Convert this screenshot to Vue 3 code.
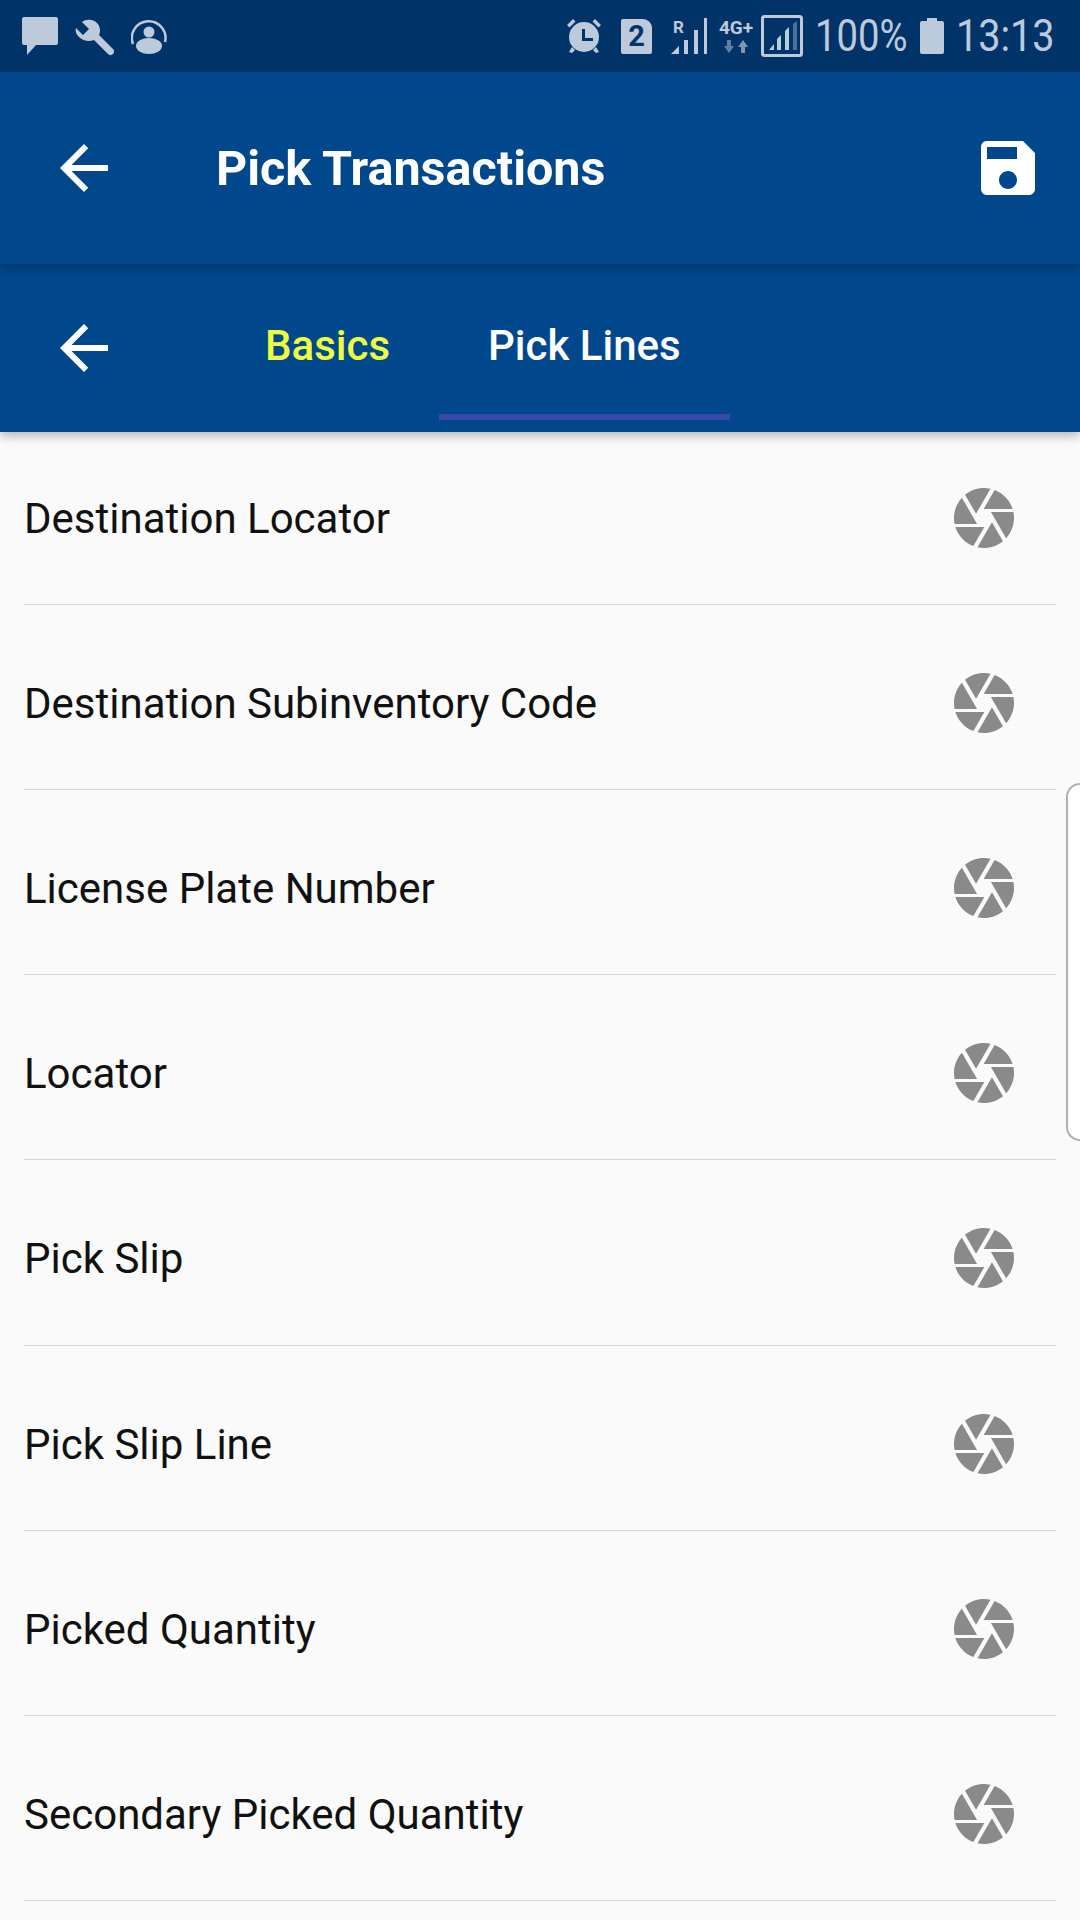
<template>
  <div class="screen">
    <div class="status">
      <div class="status__left">
        <svg class="ico" width="36" height="38" viewBox="0 0 36 38">
          <path d="M2 0h32a2 2 0 0 1 2 2v24a2 2 0 0 1-2 2H14L5 38V28H2a2 2 0 0 1-2-2V2a2 2 0 0 1 2-2z" />
        </svg>
        <svg class="ico" width="39" height="39" viewBox="0 0 39 39">
          <path d="M1 11 8 18l6-6-7-7c4-3 11-3 15 1 3 3 4 8 2 12l14 14c1.500 1.500 1.500 3.500 0 5s-3.500 1.500-5 0L19 23c-5 2-11 1-15-3-3-3-4-6-3-9z" />
        </svg>
        <svg class="ico" width="36" height="36" viewBox="0 0 36 36">
          <path class="ico__line" d="M2 26A16.800 16.800 0 1 1 34 24" />
          <circle cx="18" cy="14" r="5.500" />
          <ellipse cx="18" cy="28" rx="13" ry="8" />
        </svg>
      </div>
      <div class="status__right">
        <svg class="ico" width="36" height="36" viewBox="0 0 36 36">
          <path d="M18 4a15 15 0 1 0 0 30 15 15 0 0 0 0-30zm-2 7h3v9h8v3H16z" fill-rule="evenodd" />
          <path d="M1 7 7 1l2.500 2.500-6 6zM35 7l-6-6-2.500 2.500 6 6zM6 29l-3 5 3 1 3-3zM30 29l3 5-3 1-3-3z" />
        </svg>
        <div class="sim">2</div>
        <svg class="ico signal" width="36" height="36" viewBox="0 0 36 36">
          <text x="2" y="15" class="signal__r">R</text>
          <path d="M0 36 8 28V36zM13 22h4v14h-4zM23 12h4v24h-4zM33 0h3v36h-3z" />
        </svg>
        <div class="net">
          <span class="net__label">4G+</span>
          <svg width="24" height="13" viewBox="0 0 24 13">
            <path class="net__down" d="M3 0h4v6h3l-5 7-5-7h3z" />
            <path class="net__up" d="M19 0l5 7h-3v6h-4V7h-3z" />
          </svg>
        </div>
        <svg class="ico box" width="42" height="42" viewBox="0 0 42 42">
          <rect x="1.500" y="1.500" width="39" height="39" rx="2" fill="none" stroke="#bccadb" stroke-width="3" />
          <path d="M8 35l5-6v6zM16 35v-11l4-4v15zM24 35V16l4-4v23z" />
          <path class="box__dim" d="M32 35V9l4-3v29z" />
        </svg>
        <div class="status__slot status__slot--pct">
          <span class="status__text status__text--pct">100%</span>
        </div>
        <svg class="ico" width="24" height="36" viewBox="0 0 24 36">
          <path d="M7 0h10v3h5a2 2 0 0 1 2 2v29a2 2 0 0 1-2 2H2a2 2 0 0 1-2-2V5a2 2 0 0 1 2-2h5z" />
        </svg>
        <div class="status__slot status__slot--time">
          <span class="status__text status__text--time">13:13</span>
        </div>
      </div>
    </div>

    <header class="toolbar">
      <svg class="back" width="72" height="72" viewBox="0 0 24 24">
        <path d="M20 11H7.830l5.590-5.590L12 4l-8 8 8 8 1.410-1.410L7.830 13H20v-2z" />
      </svg>
      <h1 class="toolbar__title">Pick Transactions</h1>
      <svg class="save" width="72" height="72" viewBox="0 0 24 24">
        <path d="M17 3H5c-1.110 0-2 .9-2 2v14c0 1.100.89 2 2 2h14c1.100 0 2-.9 2-2V7l-4-4zm-5 16c-1.660 0-3-1.340-3-3s1.340-3 3-3 3 1.340 3 3-1.340 3-3 3zm3-10H5V5h10v4z" />
      </svg>
    </header>

    <nav class="tabs">
      <svg class="back" width="72" height="72" viewBox="0 0 24 24">
        <path d="M20 11H7.830l5.590-5.590L12 4l-8 8 8 8 1.410-1.410L7.830 13H20v-2z" />
      </svg>
      <div class="tabs__list">
        <div class="tab tab--done">Basics</div>
        <div class="tab tab--active">Pick Lines</div>
      </div>
    </nav>

    <main class="list">
      <div v-for="field in fields" :key="field" class="row">
        <span class="row__label">{{ field }}</span>
        <svg class="row__icon" width="72" height="72" viewBox="0 0 24 24">
          <path d="M9.400 10.500l4.770-8.260C13.470 2.090 12.750 2 12 2c-2.400 0-4.600.85-6.320 2.250l3.660 6.350.06-.1zM21.540 9c-.92-2.920-3.150-5.260-6-6.340L11.880 9h9.660zm.26 1h-7.490l.29.5 4.760 8.250C21 16.970 22 14.610 22 12c0-.69-.07-1.350-.2-2zM8.540 12l-3.900-6.750C3.010 7.030 2 9.390 2 12c0 .69.07 1.350.2 2h7.490l-1.150-2zm-6.080 3c.92 2.920 3.150 5.260 6 6.340L12.120 15H2.460zm11.270 0l-3.900 6.760c.7.15 1.420.24 2.170.24 2.400 0 4.600-.85 6.320-2.250l-3.660-6.350-.93 1.600z" />
        </svg>
      </div>
    </main>

    <div class="edge-handle" />
  </div>
</template>

<script setup>
const fields = [
  "Destination Locator",
  "Destination Subinventory Code",
  "License Plate Number",
  "Locator",
  "Pick Slip",
  "Pick Slip Line",
  "Picked Quantity",
  "Secondary Picked Quantity",
];
</script>

<style>
body {
  margin: 0;
}
</style>

<style scoped>
.screen {
  position: relative;
  width: 1080px;
  height: 1920px;
  overflow: hidden;
  background: #fafafa;
  font-family: Roboto, "Liberation Sans", sans-serif;
}

.status {
  height: 72px;
  box-sizing: border-box;
  padding: 0 26px 0 22px;
  display: flex;
  align-items: center;
  justify-content: space-between;
  background: #003469;
}
.status__left,
.status__right {
  display: flex;
  align-items: center;
}
.status__left {
  gap: 17px;
}
.ico {
  display: block;
  fill: #bccadb;
}
.ico__line {
  fill: none;
  stroke: #bccadb;
  stroke-width: 2.500;
}
.sim {
  width: 31px;
  height: 35px;
  margin: 0 19px;
  border-radius: 2px 9px 2px 2px;
  background: #bccadb;
  color: #003469;
  font-size: 29px;
  font-weight: 700;
  line-height: 35px;
  text-align: center;
}
.signal__r {
  font-size: 17px;
  font-weight: 700;
}
.net {
  width: 36px;
  margin: 0 7px 0 11px;
  display: flex;
  flex-direction: column;
  align-items: center;
  gap: 5px;
}
.net__label {
  color: #bccadb;
  font-size: 19px;
  font-weight: 700;
  line-height: 15px;
  white-space: nowrap;
}
.net__down {
  fill: #5f7fa3;
}
.net__up {
  fill: #7d97b5;
}
.box__dim {
  fill: #4f7099;
}
.status__slot {
  height: 72px;
}
.status__slot--pct {
  width: 92px;
  margin: 0 13px 0 12px;
}
.status__slot--time {
  width: 98px;
  margin-left: 12px;
}
.status__text {
  display: inline-block;
  color: #bccadb;
  font-size: 45px;
  line-height: 72px;
  white-space: nowrap;
  transform-origin: left center;
}
.status__text--pct {
  transform: scaleX(0.85);
}
.status__text--time {
  transform: scaleX(0.88);
}

.toolbar,
.tabs {
  display: flex;
  background: #00478c;
}
.toolbar {
  height: 192px;
  align-items: center;
  padding-right: 36px;
  box-shadow: 0 4px 8px rgba(0, 0, 0, 0.22);
  position: relative;
  z-index: 2;
}
.back {
  flex: none;
  margin: 0 96px 0 48px;
  fill: #fff;
}
.toolbar__title {
  flex: 1;
  margin: 0;
  color: #fff;
  font-size: 48.500px;
  font-weight: 700;
}
.save {
  fill: #fff;
}

.tabs {
  height: 168px;
  align-items: flex-start;
  box-shadow: 0 4px 10px rgba(0, 0, 0, 0.28);
  position: relative;
  z-index: 1;
}
.tabs .back {
  margin-top: 48px;
}
.tabs__list {
  display: flex;
}
.tab {
  height: 156px;
  box-sizing: border-box;
  padding: 56px 49px 0;
  font-size: 42px;
  font-weight: 500;
  line-height: 52px;
  color: #fff;
  white-space: nowrap;
}
.tab--done {
  color: #eeff41;
}
.tab--active {
  border-bottom: 6px solid #3949ab;
}

.row {
  height: 185.150px;
  box-sizing: border-box;
  margin: 0 24px 0 24px;
  padding: 13px 36px 0 0;
  display: flex;
  align-items: center;
  justify-content: space-between;
  border-bottom: 1px solid #d3d5d8;
}
.row:first-child {
  height: 173px;
  padding-top: 0;
}
.row__label {
  color: #111;
  font-size: 42px;
}
.row__icon {
  margin-top: -1px;
  fill: #8a8a8a;
}
.row:first-child .row__icon {
  margin-top: 0;
}

.edge-handle {
  position: absolute;
  top: 783px;
  left: 1066px;
  width: 30px;
  height: 358px;
  box-sizing: border-box;
  border: 2px solid #b0b0b0;
  border-radius: 14px;
  background: #fff;
}
</style>
